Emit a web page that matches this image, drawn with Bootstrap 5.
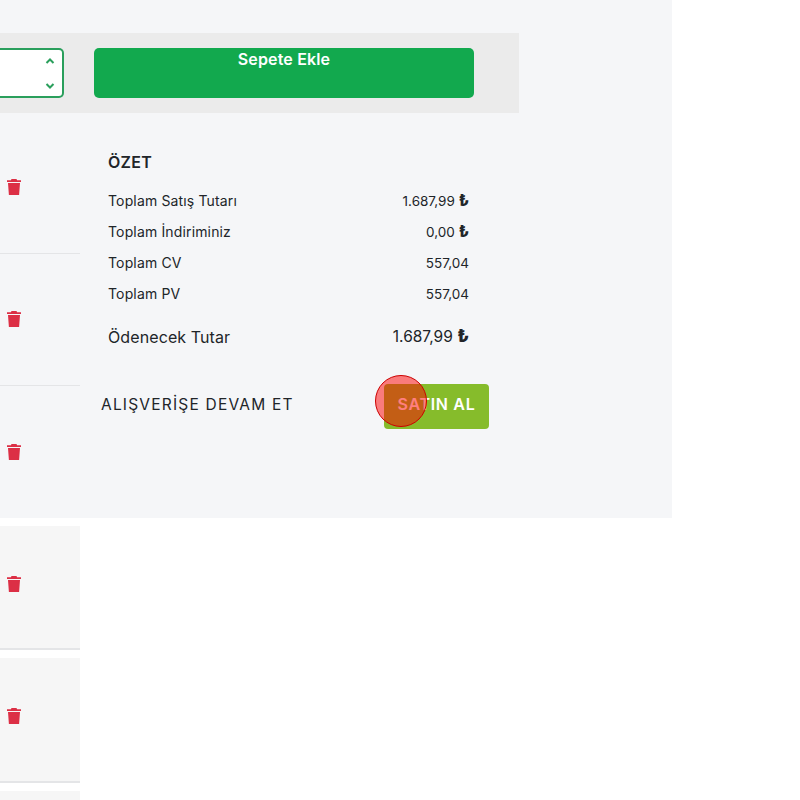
<!DOCTYPE html>
<html lang="tr">
<head>
<meta charset="utf-8">
<title>Sepet</title>
<link href="https://cdn.jsdelivr.net/npm/bootstrap@5.3.0/dist/css/bootstrap.min.css" rel="stylesheet">
<style>
html,body{margin:0;height:800px;overflow:hidden;background:#fff;}
body{font-family:Inter,"Noto Sans",sans-serif;color:#212529;}
.stage{width:800px;height:800px;display:grid;grid-template-columns:672px 128px;grid-template-rows:518px 282px;overflow:hidden;}
.panel{grid-column:1;grid-row:1;background:#f5f6f8;padding-top:33px;display:flex;flex-direction:column;}
.addbar{width:519px;height:80px;background:#ebebeb;padding-top:15px;display:flex;flex:none;}
.qtybox{width:64px;height:50px;background:#fff;border:2px solid #2a9f5c;border-left:0;border-radius:0 5px 5px 0;display:flex;flex-direction:column;justify-content:space-between;align-items:end;padding:8px 7px 7px 0;}
.qtybox svg{width:10px;height:6px;display:block;}
.addbtn{margin-left:30px;width:380px;height:50px;background:#12a94e;border-radius:5px;color:#fff;font-weight:600;font-size:16px;letter-spacing:.15px;line-height:20px;text-align:center;border:0;padding:0;display:block;align-self:start;}
.addlabel{display:block;height:48px;}
.lower{display:flex;flex:1;min-height:0;}
.carts{width:80px;flex:none;padding-top:8px;}
.cartrow{height:132.5px;border-bottom:1px solid #e4e5e7;display:flex;align-items:center;padding-left:7px;}
.binicon{width:14px;height:16px;display:block;color:#dc2f45;}
.summary{width:389px;flex:none;padding:39px 0 0 28px;}
.sumtitle{font-size:16px;font-weight:600;line-height:20px;margin:0 0 19px;letter-spacing:.3px;}
.sumline{display:flex;justify-content:space-between;font-size:13.5px;font-weight:400;line-height:20px;margin-bottom:11px;width:361px;}
.sumlabel{font-size:14px;letter-spacing:.15px;}
.sumtotal{font-size:15.5px;margin-top:21px;margin-bottom:0;line-height:24px;}
.sumtotal .sumlabel{font-size:16px;letter-spacing:.1px;}
.lira{font-weight:800;font-size:1.15em;line-height:0;}
.actions{display:flex;justify-content:space-between;align-items:flex-start;margin:35px 0 0 -7px;width:388px;}
.contlink{font-size:15.5px;letter-spacing:1.2px;color:#212529;text-decoration:none;line-height:24px;margin-top:9px;}
.buybtn{width:105px;height:45px;background:#86bc2b;color:#fff;font-weight:600;font-size:16px;border:0;border-radius:4px;padding:0 0 5px;letter-spacing:.7px;}
.tail{grid-column:1;grid-row:2;width:80px;display:flex;flex-direction:column;background:#fff;}
.tailrow{height:124.4px;background:#f6f6f6;border-bottom:2px solid #e4e5e7;margin-top:8px;display:flex;align-items:center;padding:0 0 7px 7px;flex:none;}
.tailrow.lastrow{border:0;}
.touchdot{position:absolute;left:375px;top:375px;width:52px;height:52px;border-radius:50%;background:rgba(255,0,0,.5);border:1px solid #c00;}
</style>
</head>
<body>
<div class="stage">
  <div class="panel">
    <div class="addbar">
      <div class="qtybox">
        <svg viewBox="0 0 10 6"><path d="M1.500 5 5 1.500 8.500 5" fill="none" stroke="#2a9f5c" stroke-width="2"/></svg>
        <svg viewBox="0 0 10 6"><path d="M1.500 1 5 4.500 8.500 1" fill="none" stroke="#2a9f5c" stroke-width="2"/></svg>
      </div>
      <button class="addbtn" type="button"><span class="addlabel">Sepete Ekle</span></button>
    </div>
    <div class="lower">
      <div class="carts">
        <div class="cartrow"><svg class="binicon" viewBox="0 0 14 16"><path fill="currentColor" d="M4.500 0h5l.6 1.200H14v1.700H0V1.200h3.900zM1 4h12l-.9 12H1.900z"/></svg></div>
        <div class="cartrow"><svg class="binicon" viewBox="0 0 14 16"><path fill="currentColor" d="M4.500 0h5l.6 1.200H14v1.700H0V1.200h3.900zM1 4h12l-.9 12H1.900z"/></svg></div>
        <div class="cartrow"><svg class="binicon" viewBox="0 0 14 16"><path fill="currentColor" d="M4.500 0h5l.6 1.200H14v1.700H0V1.200h3.900zM1 4h12l-.9 12H1.900z"/></svg></div>
      </div>
      <div class="summary">
        <h6 class="sumtitle">ÖZET</h6>
        <div class="sumline"><span class="sumlabel">Toplam Satış Tutarı</span><span>1.687,99 <span class="lira">₺</span></span></div>
        <div class="sumline"><span class="sumlabel">Toplam İndiriminiz</span><span>0,00 <span class="lira">₺</span></span></div>
        <div class="sumline"><span class="sumlabel">Toplam CV</span><span>557,04</span></div>
        <div class="sumline"><span class="sumlabel">Toplam PV</span><span>557,04</span></div>
        <div class="sumline sumtotal"><span class="sumlabel">Ödenecek Tutar</span><span>1.687,99 <span class="lira">₺</span></span></div>
        <div class="actions">
          <a class="contlink" href="#">ALIŞVERİŞE DEVAM ET</a>
          <button class="buybtn" type="button">SATIN AL</button>
        </div>
      </div>
    </div>
  </div>
  <div class="tail">
    <div class="tailrow"><svg class="binicon" viewBox="0 0 14 16"><path fill="currentColor" d="M4.500 0h5l.6 1.200H14v1.700H0V1.200h3.900zM1 4h12l-.9 12H1.900z"/></svg></div>
    <div class="tailrow"><svg class="binicon" viewBox="0 0 14 16"><path fill="currentColor" d="M4.500 0h5l.6 1.200H14v1.700H0V1.200h3.900zM1 4h12l-.9 12H1.900z"/></svg></div>
    <div class="tailrow lastrow"></div>
  </div>
</div>
<div class="touchdot"></div>
<script src="https://cdn.jsdelivr.net/npm/bootstrap@5.3.0/dist/js/bootstrap.bundle.min.js"></script>
</body>
</html>
